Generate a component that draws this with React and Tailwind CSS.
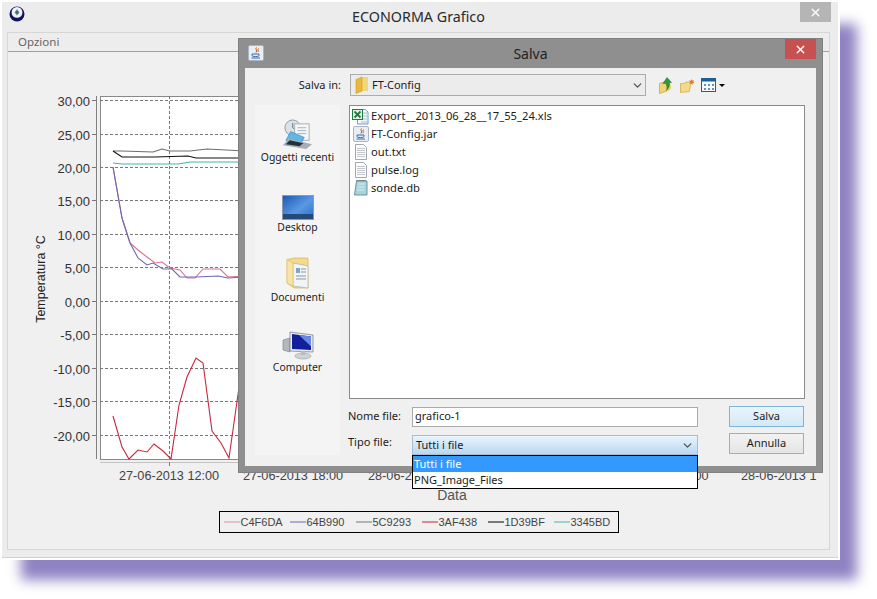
import React from "react";
import { ChevronDown, X } from "lucide-react";

const pts = (list) => list.map((p) => p.join(",")).join(" ");

const series = [
  { color: "#d9728f", points: [[113, 167], [122, 218], [130, 243], [138, 250], [147, 257], [155, 263], [162, 262], [170, 268], [180, 270], [187, 278], [195, 278], [203, 269], [220, 269], [228, 277], [245, 276]] },
  { color: "#6a68b8", points: [[113, 167], [122, 218], [130, 243], [138, 258], [147, 265], [153, 263], [163, 269], [172, 269], [180, 277], [197, 277], [218, 276], [228, 278], [245, 277]] },
  { color: "#6e6e6e", points: [[113, 151], [122, 151], [153, 152], [162, 149], [170, 151], [190, 151], [207, 149], [245, 151]] },
  { color: "#111111", points: [[113, 151], [122, 157], [155, 157], [188, 156], [196, 158], [245, 158]] },
  { color: "#48b5a8", points: [[113, 163], [122, 164], [178, 164], [190, 162], [245, 162]] },
  { color: "#c8283c", points: [[113, 416], [122, 447], [129, 459], [138, 450], [147, 452], [154, 444], [163, 451], [171, 459], [179, 405], [187, 377], [196, 358], [203, 363], [212, 431], [221, 443], [229, 458], [245, 345]] },
];

const yTicks = [
  ["30,00", 100], ["25,00", 134], ["20,00", 167], ["15,00", 200], ["10,00", 234], ["5,00", 267],
  ["0,00", 301], ["-5,00", 334], ["-10,00", 368], ["-15,00", 401], ["-20,00", 435],
];

// labels as far as they show next to the dialog
const xLabels = [
  ["27-06-2013 12:00", 119], ["27-06-2013 18:00", 243], ["28-06-2", 368], [":00", 691], ["28-06-2013 1", 741],
];
const xGrid = [169, 293, 417, 541, 665, 791];

const legend = [
  ["C4F6DA", "#d9909f"], ["64B990", "#6a68b8"], ["5C9293", "#777777"],
  ["3AF438", "#c0283c"], ["1D39BF", "#000000"], ["3345BD", "#48b5a8"],
];

const Chart = () => (
  <svg width="821" height="455" viewBox="8 52 821 455" className="block">
    <rect x="100.5" y="96.5" width="708" height="363" fill="#ffffff" stroke="#888888" />
    {yTicks.map(([label, y]) => (
      <g key={label}>
        <line x1="100" x2="808" y1={y + 0.5} y2={y + 0.5} stroke="#777777" strokeDasharray="3 2" />
        <line x1="92" x2="96" y1={y + 0.5} y2={y + 0.5} stroke="#777777" />
        <text x="90" y={y + 6} textAnchor="end" fontSize="13" fill="#333333" fontFamily="Liberation Sans, sans-serif">{label}</text>
      </g>
    ))}
    <line x1="96.5" x2="96.5" y1="96" y2="459" stroke="#808080" />
    <line x1="100" x2="808" y1="462.5" y2="462.5" stroke="#c4c4c4" />
    {xGrid.map((x) => (
      <g key={x}>
        <line x1={x + 0.5} x2={x + 0.5} y1="96" y2="459" stroke="#777777" strokeDasharray="3 2" />
        <line x1={x + 0.5} x2={x + 0.5} y1="462" y2="466" stroke="#808080" />
      </g>
    ))}
    {xLabels.map(([label, x]) => (
      <text key={label} x={x} y="480" fontSize="12.7" fill="#444444" fontFamily="Liberation Sans, sans-serif">{label}</text>
    ))}
    {series.map((s) => (
      <polyline key={s.color} points={pts(s.points)} fill="none" stroke={s.color} strokeWidth="1.1" />
    ))}
    <text transform="translate(45 279) rotate(-90)" textAnchor="middle" fontSize="12.5" fill="#222222" fontFamily="Liberation Sans, sans-serif">Temperatura °C</text>
    <text x="452" y="500" textAnchor="middle" fontSize="14" fill="#555555" fontFamily="Liberation Sans, sans-serif">Data</text>
  </svg>
);

const AppLogo = () => (
  <svg width="16" height="16" viewBox="0 0 16 16">
    <circle cx="8" cy="8" r="7.5" fill="#0d1560" />
    <circle cx="8" cy="6.4" r="5.4" fill="#f2f2f6" />
    <path d="M8 3 L10.5 6.5 L8 9.5 L5.5 6.5 Z" fill="#6f8a9a" />
    <circle cx="8" cy="6.4" r="1.3" fill="#2e7a58" />
  </svg>
);

const JavaIcon = () => (
  <svg width="16" height="16" viewBox="0 0 16 16">
    <rect x="0.5" y="0.5" width="15" height="15" rx="1.5" fill="#e9edf4" stroke="#a9b4c4" />
    <path d="M8.5 2.5c-2 2 1.5 2.5-.5 5M10.5 3.5c-1.5 1.2.5 1.7-.5 3.5" fill="none" stroke="#c2641e" strokeWidth="1" />
    <path d="M4 9h7v1.4c0 .8-1 1.1-3.5 1.1S4 11.2 4 10.4Z" fill="none" stroke="#3a6aa8" />
    <path d="M3.5 13h8.5" stroke="#3a6aa8" />
  </svg>
);

const ExcelIcon = () => (
  <svg width="17" height="17" viewBox="0 0 17 17">
    <path d="M5.5 1.5h8l2.5 2.5v12H5.5Z" fill="#f4f7fb" stroke="#7e97b8" />
    <path d="M11 5h4M11 8h4M11 11h4M9 14h6" stroke="#a9bcd2" />
    <rect x="0.5" y="1.5" width="10" height="10" fill="#e6f1e6" stroke="#1f7a3d" />
    <path d="M2.5 3.5l6 6M8.5 3.5l-6 6" stroke="#1f7a3d" strokeWidth="1.8" />
  </svg>
);

const FileIcon = () => (
  <svg width="16" height="16" viewBox="0 0 16 16">
    <path d="M2.5 0.5h8l3 3v12h-11Z" fill="#fcfcfc" stroke="#a4a8ad" />
    <path d="M4 4.5h8M4 6.5h8M4 8.5h8M4 10.5h8M4 12.5h8" stroke="#c4c8cd" />
  </svg>
);

const DbIcon = () => (
  <svg width="16" height="16" viewBox="0 0 16 16">
    <path d="M3.5 1h10.5v14H1.5Z" fill="#a8d5dc" stroke="#6d93a0" />
    <path d="M4 1v-1M6 1v-1M8 1v-1M10 1v-1M12 1v-1" stroke="#444444" />
    <path d="M5 4h7M4.6 7h7M4.2 10h7" stroke="#d2edf0" />
  </svg>
);

const SmallFolder = () => (
  <svg width="14" height="18" viewBox="0 0 14 18">
    <path d="M1 3.5 7 1v14l-6 2.5Z" fill="#e8b93c" />
    <path d="M7 1h6v14H7Z" fill="#f5d676" />
    <path d="M1 3.5 7 1v14l-6 2.5Z" fill="none" stroke="#c69a2c" strokeWidth="0.6" />
  </svg>
);

const FolderUp = () => (
  <svg width="15" height="17" viewBox="0 0 15 17">
    <path d="M0.5 6.5 8 4v10l-7.5 2.5Z" fill="#f0d277" stroke="#c8a238" strokeWidth="0.7" />
    <path d="M8 5c3 0 4.5 2 4 7l-3 2.5" fill="#f0d277" />
    <path d="M4 6.5 8 0.5l4.5 5H10.5c.3 3.5-.7 6-3 7.8C9 10.5 7.5 8 6.8 6.5Z" fill="#2c9a3a" stroke="#1a7028" strokeWidth="0.5" />
  </svg>
);

const FolderNew = () => (
  <svg width="15" height="15" viewBox="0 0 15 15">
    <path d="M0.5 5.5h4l1-1.5h5v2.5L9.5 13.5l-9 1Z" fill="#f3da88" stroke="#cfa73e" strokeWidth="0.7" />
    <path d="M11.5 1l.7 1.6L14 2l-.8 1.6L14.5 5l-1.8.2-.6 1.8-1-1.5-1.7.3.7-1.7L9 2.6l1.8.1Z" fill="#e8772a" />
  </svg>
);

const ListView = () => (
  <svg width="15" height="14" viewBox="0 0 15 14">
    <rect x="0.5" y="0.5" width="14" height="13" fill="#f6f9fd" stroke="#1f5f96" />
    <rect x="0.5" y="0.5" width="14" height="3" fill="#1f5f96" />
    <path d="M3 6h2v2H3ZM7 6h2v2H7ZM11 6h2v2h-2ZM3 10h2v2H3ZM7 10h2v2H7ZM11 10h2v2h-2Z" fill="#6f8faa" />
  </svg>
);

const RecentIcon = () => (
  <svg width="31" height="31" viewBox="0 0 32 32">
    <circle cx="11" cy="9" r="8" fill="#dce3e8" stroke="#8f9aa3" />
    <path d="M11 4v5l3 2" fill="none" stroke="#6a747c" />
    <rect x="13" y="5" width="15" height="17" fill="#f4f6f8" stroke="#a8b0b8" />
    <path d="M16 9h9M16 12h9M16 15h9" stroke="#9db4c8" />
    <path d="M9 13l14 6-4 7-15-4Z" fill="#5fb7e6" stroke="#2d7fb0" strokeWidth="0.6" />
    <path d="M1 27l6-7 24 6-6 5Z" fill="#a6adb3" />
    <path d="M4 26l4-4 14 3-4 3Z" fill="#23303a" />
  </svg>
);

const DesktopIcon = () => (
  <svg width="32" height="25" viewBox="0 0 32 25">
    <defs>
      <linearGradient id="desk" x1="0" y1="0" x2="1" y2="1">
        <stop offset="0" stopColor="#1d56b5" />
        <stop offset="0.55" stopColor="#5a98e4" />
        <stop offset="1" stopColor="#2c6bc6" />
      </linearGradient>
    </defs>
    <rect x="0.5" y="0.5" width="31" height="24" fill="url(#desk)" stroke="#8d99a8" />
    <rect x="1" y="19" width="30" height="5" fill="#264a78" />
  </svg>
);

const DocsIcon = () => (
  <svg width="24" height="33" viewBox="0 0 24 33">
    <path d="M1 2.5 8 1h14v30H8L1 26Z" fill="#f3d98b" stroke="#d4b45c" strokeWidth="0.7" />
    <path d="M7 6l15 3v22L7 29Z" fill="#f2f5f8" stroke="#a3a9af" strokeWidth="0.6" />
    <path d="M10 11h4v5h-4Z" fill="#7fa6c2" />
    <path d="M15 12h5M15 15h5M10 19h10M10 22h10" stroke="#8b96a3" />
    <path d="M1 2.5 7 6v23L1 26Z" fill="#f7e4a6" stroke="#d4b45c" strokeWidth="0.5" />
  </svg>
);

const ComputerIcon = () => (
  <svg width="32" height="30" viewBox="0 0 32 30">
    <path d="M1 10l7-2v14l-7-2Z" fill="#b4b8bc" stroke="#7a7e82" strokeWidth="0.6" />
    <path d="M8 2l23 3v17L8 21Z" fill="#e8ecef" stroke="#70757a" strokeWidth="0.7" />
    <path d="M10 4l19 2.6v13.4L10 19Z" fill="#10209a" />
    <path d="M17 5l12 1.6v10Z" fill="#6a88e6" />
    <ellipse cx="21" cy="26" rx="8" ry="3" fill="#cfd2d5" stroke="#9a9da0" strokeWidth="0.6" />
    <path d="M19 21h4v4h-4Z" fill="#b8bbbf" />
  </svg>
);

const places = [
  ["Oggetti recenti", RecentIcon],
  ["Desktop", DesktopIcon],
  ["Documenti", DocsIcon],
  ["Computer", ComputerIcon],
];

const files = [
  ["Export__2013_06_28__17_55_24.xls", ExcelIcon],
  ["FT-Config.jar", JavaIcon],
  ["out.txt", FileIcon],
  ["pulse.log", FileIcon],
  ["sonde.db", DbIcon],
];

const SaveDialog = () => (
  <div className="absolute left-[236px] top-[36px] flex h-[435px] w-[585px] flex-col border border-[#808080] bg-[#8f8f8f] font-['Noto_Sans',sans-serif] text-[11px] text-[#1c1c1c]">
    <div className="relative flex h-[29px] shrink-0 items-center justify-center">
      <div className="absolute left-[9px] top-[6px]">
        <JavaIcon />
      </div>
      <span className="text-[14px] text-[#222222]">Salva</span>
      <div className="absolute right-[6px] top-0 flex h-[20px] w-[31px] items-center justify-center bg-[#c75050]">
        <X size={13} strokeWidth={2.5} className="text-white" />
      </div>
    </div>
    <div className="relative mx-[6px] mb-[6px] flex flex-1 flex-col bg-[#f0f0f0] pl-[10px] pr-[9px] pt-[6px]">
      <div className="flex h-[22px] items-center">
        <span className="w-[86px] text-right">Salva in:</span>
        <div className="ml-[9px] flex h-[22px] w-[296px] items-center justify-between border border-[#acacac] bg-[#ececec] pl-[4px] pr-[1px]">
          <div className="flex items-center gap-[3px]">
            <SmallFolder />
            <span>FT-Config</span>
          </div>
          <ChevronDown size={13} strokeWidth={2.5} className="text-[#555555]" />
        </div>
        <div className="ml-[13px] flex items-center gap-[6px]">
          <FolderUp />
          <FolderNew />
          <div className="flex items-center gap-[3px]">
            <ListView />
            <span className="h-0 w-0 border-x-[3px] border-t-[3px] border-x-transparent border-t-black" />
          </div>
        </div>
      </div>
      <div className="mt-[9px] flex h-[294px]">
        <div className="flex h-[350px] w-[85px] shrink-0 flex-col bg-[#f4f4f4]">
          {places.map(([label, Icon]) => (
            <div key={label} className="flex h-[70px] flex-col items-center justify-end pb-[11px] text-[10.4px]">
              <Icon />
              <span className="leading-[14px]">{label}</span>
            </div>
          ))}
        </div>
        <div className="ml-[9px] w-[456px] border border-[#8a8a8a] bg-white pl-[2px] pt-[1px]">
          {files.map(([name, Icon]) => (
            <div key={name} className="flex h-[18px] items-center gap-[2px] text-[11.2px]">
              <span className="flex w-[17px] justify-center">
                <Icon />
              </span>
              <span>{name}</span>
            </div>
          ))}
        </div>
      </div>
      <div className="mt-[7px] flex h-[21px] items-center pl-[93px]">
        <span className="w-[64px]">Nome file:</span>
        <div className="flex h-[20px] w-[286px] items-center border border-[#aaaaaa] bg-white px-[2px]">grafico-1</div>
        <div className="ml-[31px] flex h-[21px] w-[75px] items-center justify-center border border-[#7eb4d8] bg-gradient-to-b from-[#eaf5fc] to-[#d3e8f6]">Salva</div>
      </div>
      <div className="mt-[6px] flex h-[21px] items-start pl-[93px]">
        <span className="flex h-[19px] w-[64px] items-center">Tipo file:</span>
        <div className="mt-[2px] flex h-[20px] w-[286px] items-center justify-between border border-[#a9bdd1] bg-gradient-to-b from-[#eaf4fc] to-[#b9d7f1] pl-[3px] pr-[3px]">
          <span>Tutti i file</span>
          <ChevronDown size={13} strokeWidth={2.5} className="text-[#555555]" />
        </div>
        <div className="ml-[31px] flex h-[21px] w-[75px] items-center justify-center border border-[#acacac] bg-gradient-to-b from-[#f2f2f2] to-[#e5e5e5]">Annulla</div>
      </div>
      <div className="absolute left-[167px] top-[387px] h-[34px] w-[286px] border border-black bg-white">
        <div className="flex h-[16px] items-center bg-[#3399ff] pl-[1px] text-white">Tutti i file</div>
        <div className="flex h-[16px] items-center pl-[1px]">PNG_Image_Files</div>
      </div>
    </div>
  </div>
);

export default function App() {
  return (
    <div className="h-[599px] w-[877px] overflow-hidden bg-white pl-[2px] pt-[2px]">
      <div className="relative flex h-[556px] w-[836px] flex-col border-b border-[#d0d0d0] bg-[#ececec] pb-[7px] pl-[5px] pr-[8px] shadow-[0_0_0_2px_#ffffff,19px_22px_12px_#8f83c3]">
        <div className="relative flex h-[30px] shrink-0 items-center justify-center">
          <div className="absolute left-[2px] top-[4px]">
            <AppLogo />
          </div>
          <span className="font-['Noto_Sans',sans-serif] text-[14.3px] text-[#2a2a2a]">ECONORMA Grafico</span>
          <div className="absolute right-[-1px] top-0 flex h-[20px] w-[31px] items-center justify-center bg-[#b5b5b5]">
            <X size={13} strokeWidth={2.5} className="text-white" />
          </div>
        </div>
        <div className="flex flex-1 flex-col border border-[#d6d6d6] bg-[#f0f0f0]">
          <div className="flex h-[19px] shrink-0 items-center border-b border-[#a0a0a0] bg-[#ededed] pl-[10px] font-['Noto_Sans',sans-serif] text-[11.5px] text-[#666666]">Opzioni</div>
          <Chart />
          <div className="mt-[4px] flex justify-center">
            <div className="flex h-[22px] w-[400px] items-center border border-black bg-[#f0f0f0] pl-[4px] font-['Liberation_Sans',sans-serif] text-[11px] text-[#444444]">
              {legend.map(([label, color]) => (
                <div key={label} className="flex w-[66px] shrink-0 items-center gap-[1px]">
                  <svg width="16" height="4" viewBox="0 0 16 4">
                    <line x1="0" x2="16" y1="2" y2="2" stroke={color} />
                  </svg>
                  <span>{label}</span>
                </div>
              ))}
            </div>
          </div>
        </div>
        <SaveDialog />
      </div>
    </div>
  );
}
